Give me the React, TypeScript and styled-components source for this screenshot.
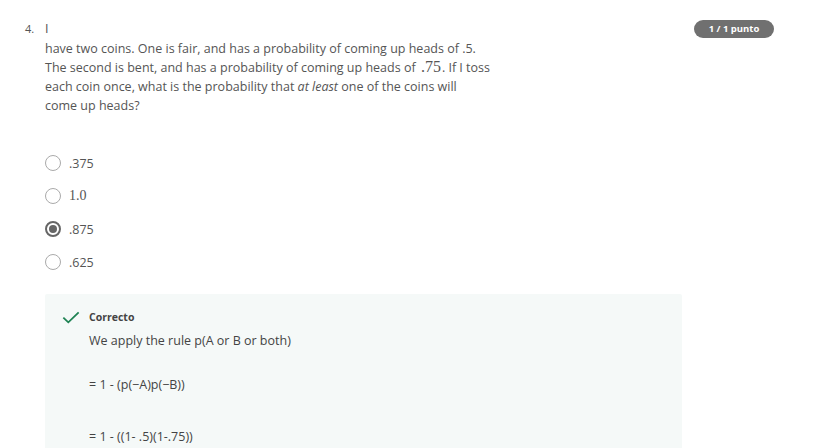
import styled, { createGlobalStyle } from "styled-components";

const GlobalStyle = createGlobalStyle`
  body {
    margin: 0;
    background: #ffffff;
    font-family: "Open Sans", "DejaVu Sans", sans-serif;
    color: #373a3c;
  }
`;

const options = [
  { label: ".375", math: false, checked: false },
  { label: "1.0", math: true, checked: false },
  { label: ".875", math: false, checked: true },
  { label: ".625", math: false, checked: false },
];

const App = () => {
  return (
    <>
      <GlobalStyle />
      <Page>
        <Header>
          <Number>4.</Number>
          <Question>
            <p>I</p>
            <p>
              have two coins. One is fair, and has a probability of coming up heads of .5.
              <br />
              The second is bent, and has a probability of coming up heads of <MathText>.75</MathText>. If I toss
              <br />
              each coin once, what is the probability that <em>at least</em> one of the coins will
              <br />
              come up heads?
            </p>
          </Question>
          <Badge>1 / 1 punto</Badge>
        </Header>

        <Options>
          {options.map((o) => (
            <Option key={o.label}>
              <Radio $checked={o.checked} />
              <OptionLabel $math={o.math}>{o.label}</OptionLabel>
            </Option>
          ))}
        </Options>

        <Feedback>
          <CheckIcon viewBox="0 0 20 14">
            <path d="M1.5 7.2 L7 12.4 L18.5 1.2" fill="none" stroke="#1f8354" strokeWidth="2" />
          </CheckIcon>
          <FeedbackBody>
            <FeedbackTitle>Correcto</FeedbackTitle>
            <FeedbackLine $gap={7}>We apply the rule p(A or B or both)</FeedbackLine>
            <FeedbackLine $gap={25}>= 1 - (p(−A)p(−B))</FeedbackLine>
            <FeedbackLine $gap={33}>= 1 - ((1- .5)(1-.75))</FeedbackLine>
          </FeedbackBody>
        </Feedback>
      </Page>
    </>
  );
};

const Page = styled.div`
  padding: 19px 61px 0 25px;
`;

const Header = styled.div`
  display: flex;
  align-items: flex-start;
`;

const Number = styled.div`
  width: 20px;
  font-size: 11px;
  line-height: 19px;
  color: #555;
`;

const Question = styled.div`
  width: 480px;
  font-size: 12.5px;
  line-height: 19px;
  color: #555;
  white-space: nowrap;

  p {
    margin: 0 0 1px;
  }
`;

const MathText = styled.span`
  font-family: "Liberation Serif", "DejaVu Serif", serif;
  font-size: 16px;
  line-height: 0;
  margin: 0 1px 0 2px;
`;

const Badge = styled.div`
  margin-left: auto;
  margin-top: 1px;
  height: 18px;
  width: 80px;
  border-radius: 9px;
  background: #707070;
  color: #fff;
  font-size: 9.5px;
  font-weight: 700;
  line-height: 18px;
  text-align: center;
`;

const Options = styled.div`
  display: flex;
  flex-direction: column;
  gap: 17px;
  margin: 39px 0 0 20px;
`;

const Option = styled.div`
  display: flex;
  align-items: center;
  height: 16px;
`;

const Radio = styled.span<{ $checked: boolean }>`
  box-sizing: border-box;
  width: 16px;
  height: 16px;
  border-radius: 50%;
  border: ${(p) => (p.$checked ? "2px solid #666" : "1px solid #aaa")};
  margin-right: 8px;
  display: flex;
  align-items: center;
  justify-content: center;

  &::after {
    content: "";
    display: ${(p) => (p.$checked ? "block" : "none")};
    width: 8px;
    height: 8px;
    border-radius: 50%;
    background: #666;
  }
`;

const OptionLabel = styled.span<{ $math: boolean }>`
  font-family: ${(p) =>
    p.$math ? '"Liberation Serif", "DejaVu Serif", serif' : '"Open Sans", sans-serif'};
  font-size: ${(p) => (p.$math ? "14px" : "12.5px")};
  color: #555;
`;

const Feedback = styled.div`
  display: flex;
  align-items: flex-start;
  margin: 24px 0 0 20px;
  width: 637px;
  height: 160px;
  box-sizing: border-box;
  padding: 17px 0 0 17px;
  background: #f5f9f8;
  border-radius: 2px;
`;

const CheckIcon = styled.svg`
  width: 18px;
  height: 13px;
  margin-right: 9px;
  flex-shrink: 0;
`;

const FeedbackBody = styled.div`
  display: flex;
  flex-direction: column;
`;

const FeedbackTitle = styled.div`
  font-size: 10.5px;
  font-weight: 700;
  line-height: 14px;
  color: #444;
  margin-top: -1px;
`;

const FeedbackLine = styled.div<{ $gap: number }>`
  font-size: 12.5px;
  line-height: 19px;
  color: #444;
  margin-top: ${(p) => p.$gap}px;
`;

export default App;
